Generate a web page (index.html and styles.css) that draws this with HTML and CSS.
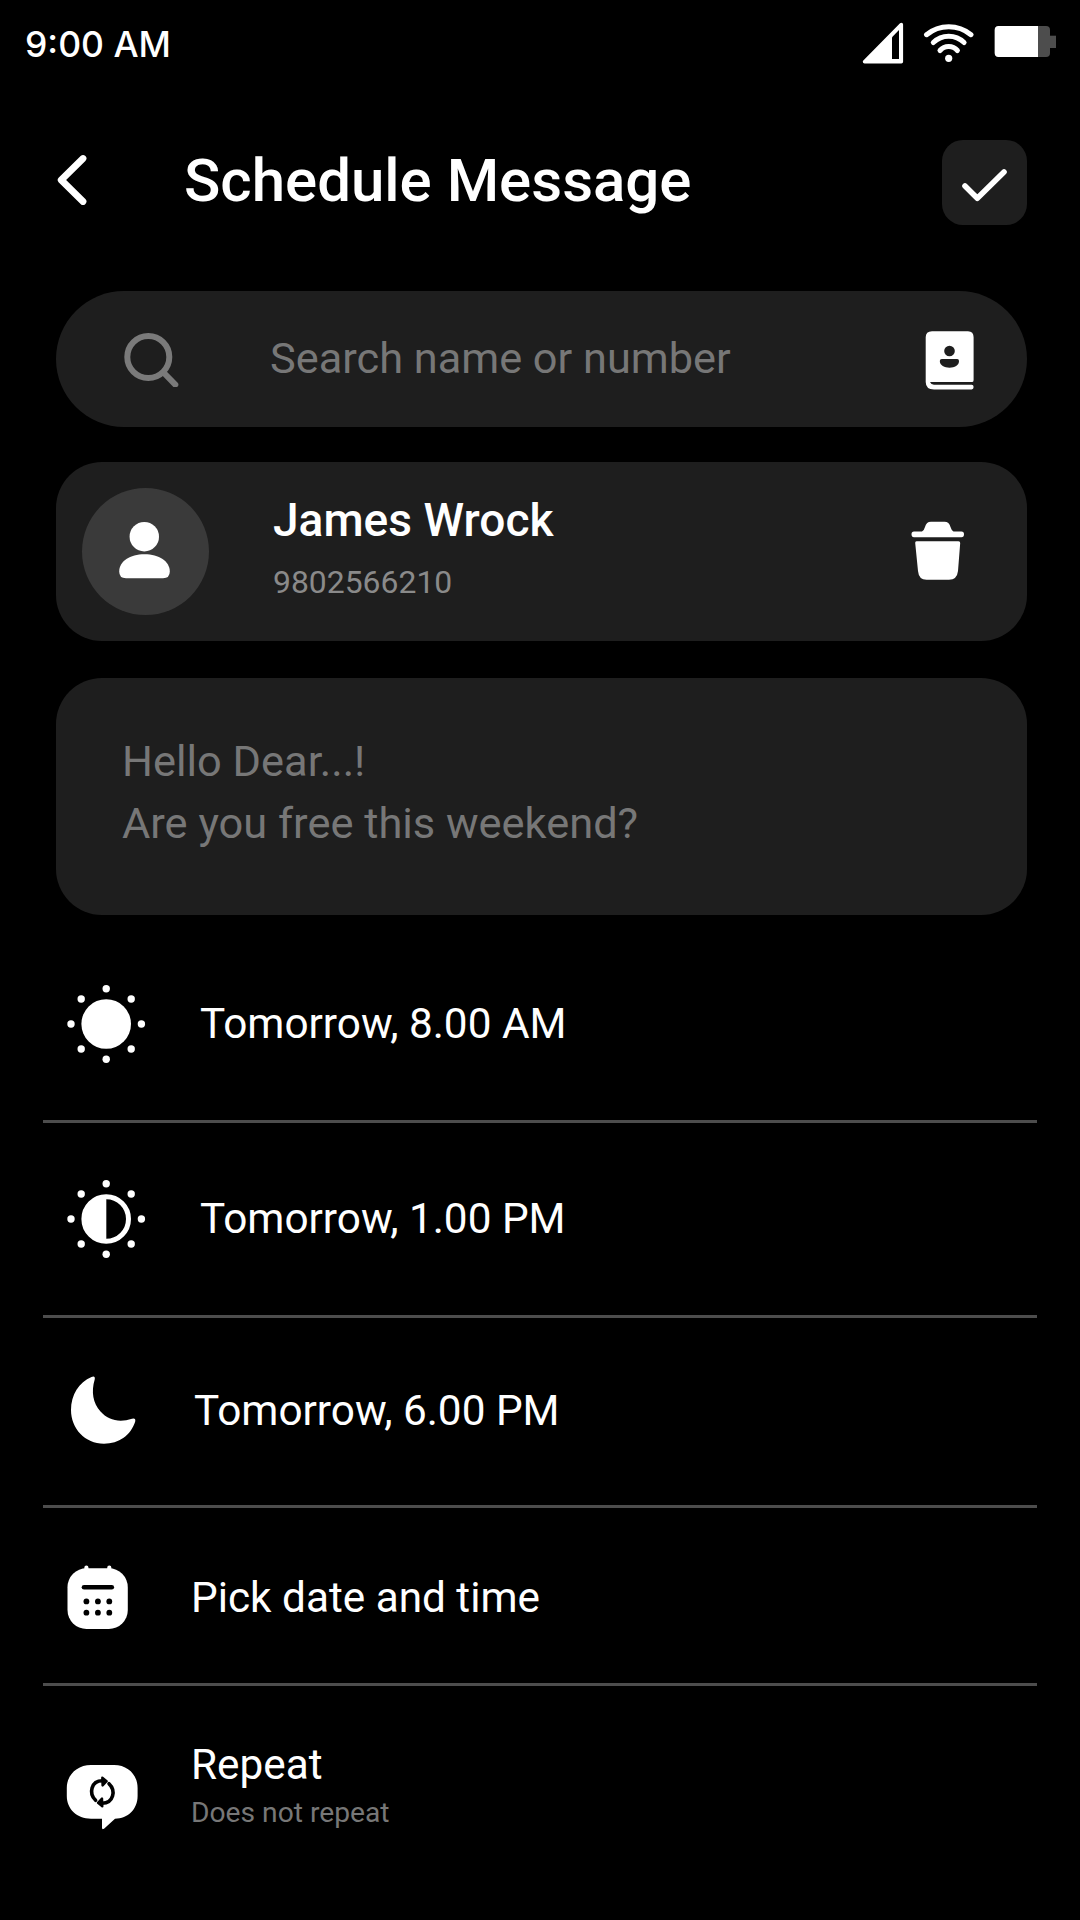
FILE: index.html
```html
<!DOCTYPE html>
<html lang="en">
<head>
  <meta charset="UTF-8">
  <meta name="viewport" content="width=device-width, initial-scale=1.0">
  <title>Schedule Message</title>
  <link rel="stylesheet" href="styles.css">
</head>
<body>
<div class="status-bar">
  <span class="time">9:00 AM</span>
  <div class="status-icons">
    <svg width="42" height="44" viewBox="0 0 42 44">
      <path d="M2.6 39.8 L39.3 2.6 V39.8 Z" fill="#fff" stroke="#fff" stroke-width="3.6" stroke-linejoin="round"/>
      <path d="M30 15.3 L37 8 V37 H30 Z" fill="#000"/>
    </svg>
    <svg width="52" height="44" viewBox="0 0 52 44" fill="none" stroke="#fff" stroke-width="5" stroke-linecap="round">
      <path d="M3.5 12.7 A35 35 0 0 1 48 12.7"/>
      <path d="M10.3 20.5 A22 22 0 0 1 41.1 20.5"/>
      <path d="M17 28.5 A11.5 11.5 0 0 1 34.4 28.5"/>
      <circle cx="25.7" cy="36.3" r="3.6" fill="#fff" stroke="none"/>
    </svg>
    <svg width="63" height="44" viewBox="0 0 63 44">
      <rect x="0.7" y="4" width="55.3" height="31" rx="4" fill="#4d4d4d"/>
      <rect x="55" y="13.7" width="7" height="12.3" fill="#4d4d4d"/>
      <path d="M44 4 H4.7 A4 4 0 0 0 0.7 8 V31 A4 4 0 0 0 4.7 35 H44 Z" fill="#fff"/>
    </svg>
  </div>
</div>

<header class="header">
  <svg class="back" width="32" height="61" viewBox="0 0 32 61">
    <path d="M27 6.5 L5.2 28 L27 49.5" fill="none" stroke="#fff" stroke-width="6.8" stroke-linecap="round" stroke-linejoin="round"/>
  </svg>
  <h1>Schedule Message</h1>
  <button class="confirm">
    <svg width="85" height="85" viewBox="0 0 85 85">
      <path d="M23 46 L35.3 58.2 L62 32" fill="none" stroke="#fff" stroke-width="5.6" stroke-linecap="round" stroke-linejoin="round"/>
    </svg>
  </button>
</header>

<div class="search">
  <svg width="56" height="56" viewBox="0 0 56 56" fill="none" stroke="#7a7a7a" stroke-width="6" stroke-linecap="round">
    <circle cx="24.3" cy="26" r="21"/>
    <path d="M40 42 L51.3 53.7"/>
  </svg>
  <span class="placeholder">Search name or number</span>
  <svg width="50" height="64" viewBox="0 0 50 64">
    <path d="M7 4.3 H43 Q48.6 4.3 48.6 10.3 V53 Q48.6 55 47.3 55 H5 Q6 57.7 9 57.7 H46.6 Q48.6 57.7 48.6 60 Q48.6 62.4 46.6 62.4 H9 Q0.7 62.4 0.7 55 V10.3 Q0.7 4.3 7 4.3 Z" fill="#fff"/>
    <circle cx="24.5" cy="24" r="5.3" fill="#1e1e1e"/>
    <path d="M16.8 32 H32.2 Q34 32 34 34 C34 38.5 29.5 40.7 24.5 40.7 C19.5 40.7 14.8 38.5 14.8 34 Q14.8 32 16.8 32 Z" fill="#1e1e1e"/>
  </svg>
</div>

<div class="contact">
  <div class="avatar">
    <svg width="52" height="58" viewBox="0 0 52 58" fill="#fff">
      <circle cx="25.3" cy="14.7" r="14.7"/>
      <path d="M25.5 32.3 C40 32.3 50.8 39.5 50.8 49.5 Q50.8 56.3 44 56.3 H7 Q0.2 56.3 0.2 49.5 C0.2 39.5 11 32.3 25.5 32.3 Z"/>
    </svg>
  </div>
  <div class="contact-info">
    <div class="name">James Wrock</div>
    <div class="number">9802566210</div>
  </div>
  <svg width="54" height="61" viewBox="0 0 54 61" fill="#fff">
    <path d="M3 10.5 H11 Q13 9.5 14 6 Q15.3 0.8 20 0.8 H33.5 Q38.2 0.8 39.5 6 Q40.5 9.5 42.5 10.5 H50.5 Q53 10.5 53 13.3 Q53 16.2 50.5 16.2 H3 Q0.5 16.2 0.5 13.3 Q0.5 10.5 3 10.5 Z"/>
    <path d="M5.5 20.2 H47.5 Q49.3 20.2 49.2 22 L47 50 Q46 58.8 38 58.8 H15.5 Q7.8 58.8 7 50 L4.2 22 Q4 20.2 5.5 20.2 Z"/>
  </svg>
</div>

<div class="message">
  <p>Hello Dear...!<br>Are you free this weekend?</p>
</div>

<div class="options">
  <div class="option morning">
    <svg width="80" height="80" viewBox="0 0 80 80" fill="#fff">
      <circle cx="40.2" cy="40" r="24.8"/>
      <circle cx="40.2" cy="4.8" r="3.7"/>
      <circle cx="65.2" cy="15" r="3.7"/>
      <circle cx="75.4" cy="40" r="3.7"/>
      <circle cx="65.2" cy="65" r="3.7"/>
      <circle cx="40.2" cy="75.2" r="3.7"/>
      <circle cx="15.2" cy="65" r="3.7"/>
      <circle cx="5" cy="40" r="3.7"/>
      <circle cx="15.2" cy="15" r="3.7"/>
    </svg>
    <span class="label">Tomorrow, 8.00 AM</span>
  </div>
  <div class="option noon">
    <svg width="80" height="80" viewBox="0 0 80 80" fill="#fff">
      <circle cx="40.2" cy="40" r="22.3" fill="none" stroke="#fff" stroke-width="5"/>
      <path d="M40.3 17 V63 A23 23 0 0 1 40.3 17 Z"/>
      <circle cx="40.2" cy="4.8" r="3.7"/>
      <circle cx="65.2" cy="15" r="3.7"/>
      <circle cx="75.4" cy="40" r="3.7"/>
      <circle cx="65.2" cy="65" r="3.7"/>
      <circle cx="40.2" cy="75.2" r="3.7"/>
      <circle cx="15.2" cy="65" r="3.7"/>
      <circle cx="5" cy="40" r="3.7"/>
      <circle cx="15.2" cy="15" r="3.7"/>
    </svg>
    <span class="label">Tomorrow, 1.00 PM</span>
  </div>
  <div class="option evening">
    <svg width="80" height="80" viewBox="0 0 80 80" fill="#fff">
      <path d="M25.5 7 Q29.5 5.5 28.7 9.5 C25 22 27 33 34.5 41.5 C42 50 53 53 66 48.8 Q70 47.8 69.2 51.5 C65 65 53 73.7 38 73.7 C19 73.7 5 58.5 5 40 C5 25 13 12 25.5 7 Z"/>
    </svg>
    <span class="label">Tomorrow, 6.00 PM</span>
  </div>
  <div class="option pick">
    <svg width="80" height="80" viewBox="0 0 80 80">
      <rect x="1.5" y="10.3" width="60.3" height="60.7" rx="19" fill="#fff"/>
      <path d="M20.4 9.7 V16 M43.3 9.7 V16" stroke="#fff" stroke-width="4.2" stroke-linecap="round"/>
      <path d="M18 29.3 H45.8" stroke="#000" stroke-width="4.6" stroke-linecap="round"/>
      <circle cx="20.4" cy="43.4" r="2.9"/>
      <circle cx="31.9" cy="43.4" r="2.9"/>
      <circle cx="43.3" cy="43.4" r="2.9"/>
      <circle cx="20.4" cy="54.7" r="2.9"/>
      <circle cx="31.9" cy="54.7" r="2.9"/>
      <circle cx="43.3" cy="54.7" r="2.9"/>
    </svg>
    <span class="label">Pick date and time</span>
  </div>
  <div class="option repeat">
    <svg width="80" height="68" viewBox="0 0 80 68">
      <path d="M25 2 H48 C62 2 71.6 12 71.6 25 V33 C71.6 46 62 55.7 49 55.7 L38 65.7 Q36 67 36 64.5 V55.7 H25 C11 55.7 0.8 46 0.8 33 V25 C0.8 12 11 2 25 2 Z" fill="#fff"/>
      <g fill="none" stroke="#000" stroke-width="3.6" stroke-linecap="round" stroke-linejoin="round">
        <path d="M29.6 37.3 C22.5 30.5 25 17.8 36.5 17.8"/>
        <path d="M43 20.7 C50.1 27.5 47.6 40.2 36.1 40.2"/>
        <path d="M36.3 14.8 L40.6 18.2 L36.6 22.4 Z" fill="#000" stroke-width="2.4"/>
        <path d="M36.3 43.2 L32 39.8 L36 35.6 Z" fill="#000" stroke-width="2.4"/>
      </g>
    </svg>
    <div>
      <div class="label">Repeat</div>
      <div class="hint">Does not repeat</div>
    </div>
  </div>
</div>
</body>
</html>
```
FILE: styles.css
```css
* {
  box-sizing: border-box;
}
body {
  margin: 0;
  background-color: #000;
  color: #fff;
  font-family: Roboto, sans-serif;
}
svg {
  display: block;
  flex-shrink: 0;
}
.status-bar {
  display: flex;
  justify-content: space-between;
  height: 140px;
  padding: 22px 23px 0 25px;
}
.time {
  font-family: Inter, sans-serif;
  font-size: 35.5px;
  font-weight: 500;
  line-height: 46px;
}
.status-icons {
  display: flex;
  gap: 19px;
}
.header {
  display: flex;
  align-items: center;
  height: 85px;
  margin: 0 53px 0 56px;
}
.header h1 {
  flex: 1;
  margin: 0 0 4px 96px;
  font-size: 60px;
  font-weight: 500;
  line-height: 70px;
}
.confirm {
  width: 85px;
  height: 85px;
  padding: 0;
  border: none;
  border-radius: 21px;
  background-color: #1e1e1e;
}
.search {
  display: flex;
  align-items: center;
  height: 136px;
  margin: 66px 53px 0 56px;
  padding: 0 52px 0 68px;
  border-radius: 68px;
  background-color: #1e1e1e;
}
.placeholder {
  flex: 1;
  margin-left: 90px;
  padding-bottom: 2px;
  font-size: 43.3px;
  color: #777;
}
.contact {
  display: flex;
  align-items: center;
  height: 179px;
  margin: 35px 53px 0 56px;
  padding: 0 62px 0 26px;
  border-radius: 46px;
  background-color: #1e1e1e;
}
.avatar {
  display: flex;
  align-items: center;
  justify-content: center;
  width: 127px;
  height: 127px;
  padding: 0 2px 2px 0;
  border-radius: 50%;
  background-color: #3a3a3a;
}
.contact-info {
  flex: 1;
  margin-left: 64px;
  padding-bottom: 9px;
}
.name {
  font-size: 46.1px;
  font-weight: 500;
  line-height: 54px;
}
.number {
  margin-top: 16px;
  font-size: 31.9px;
  line-height: 38px;
  color: #8a8a8a;
}
.message {
  height: 237px;
  margin: 37px 53px 0 56px;
  padding: 53px 66px;
  border-radius: 46px;
  background-color: #1e1e1e;
}
.message p {
  margin: 0;
  font-size: 43.4px;
  line-height: 62px;
  color: #777;
}
.options {
  margin: 0 43px;
}
.option {
  display: flex;
  align-items: center;
  padding-left: 23px;
  border-bottom: 3px solid #4d4d4d;
}
.label {
  font-size: 42.3px;
  line-height: 50px;
}
.morning {
  height: 208px;
  padding-top: 13px;
  gap: 54px;
}
.noon {
  height: 195px;
  gap: 54px;
}
.evening {
  height: 190px;
  padding-bottom: 3px;
  gap: 48px;
}
.evening .label {
  padding-top: 2px;
}
.pick {
  height: 178px;
  padding-top: 4px;
  gap: 45px;
}
.repeat {
  align-items: flex-start;
  padding-top: 54px;
  gap: 45px;
  border-bottom: none;
}
.repeat svg {
  margin-top: 23px;
}
.hint {
  margin-top: 6px;
  font-size: 28.2px;
  line-height: 34px;
  color: #777;
}
```
